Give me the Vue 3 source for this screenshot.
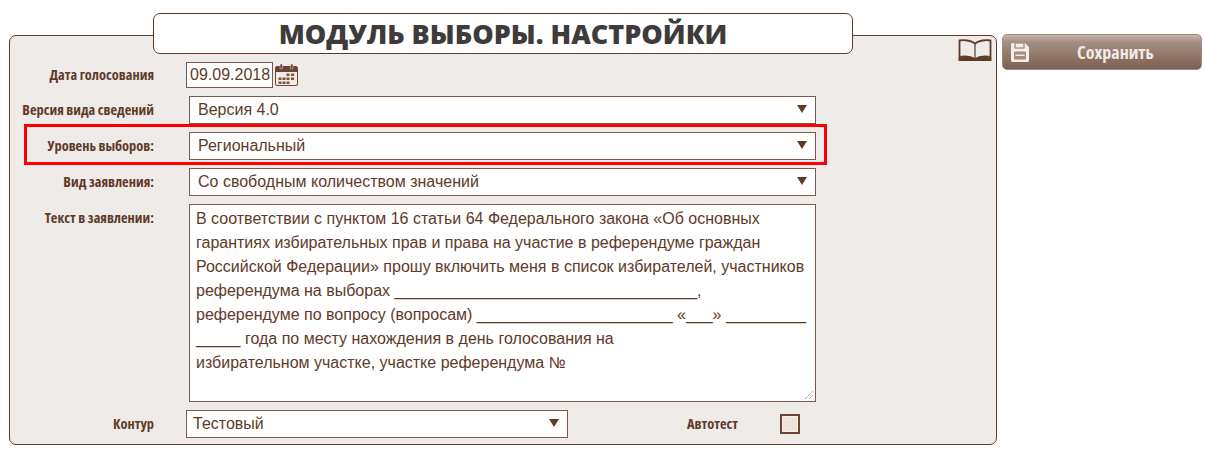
<script setup>
const statement = `В соответствии с пунктом 16 статьи 64 Федерального закона «Об основных
гарантиях избирательных прав и права на участие в референдуме граждан
Российской Федерации» прошу включить меня в список избирателей, участников
референдума на выборах __________________________________,
референдуме по вопросу (вопросам) ______________________ «___» _________
_____ года по месту нахождения в день голосования на
избирательном участке, участке референдума №`
</script>

<template>
  <div class="page">
    <main class="main">
      <h1 class="title">МОДУЛЬ ВЫБОРЫ. НАСТРОЙКИ</h1>
      <section class="panel">
        <svg class="book" viewBox="0 0 34 22" width="34" height="22" aria-hidden="true">
          <path d="M17 4.500C13 1.500 6 0.500 1.500 1.500V18C7 17 13 17.500 17 20C21 17.500 27 17 32.500 18V1.500C28 0.500 21 1.500 17 4.500Z" fill="none" stroke="#5f3a28" stroke-width="1.800"/>
          <path d="M17 4.500V20" stroke="#5f3a28" stroke-width="1.200"/>
          <path d="M0.500 18.500H3C8 17.500 13 18 17 20C21 18 26 17.500 31 18.500H33.500V22H0.500Z" fill="#5f3a28"/>
        </svg>

        <div class="row date-row">
          <label class="label"><span>Дата голосования</span></label>
          <div class="date-input">09.09.2018</div>
          <svg class="calendar" viewBox="0 0 23 22" width="23" height="22" aria-hidden="true">
            <rect x="0.500" y="2.500" width="22" height="19" rx="1.500" fill="#f2ebe6" stroke="#6b4636"/>
            <path d="M1 3H22V8H1Z" fill="#6b4636"/>
            <rect x="5" y="0" width="2.500" height="5" rx="1" fill="#6b4636" stroke="#efebe8" stroke-width="0.500"/>
            <rect x="15.500" y="0" width="2.500" height="5" rx="1" fill="#6b4636" stroke="#efebe8" stroke-width="0.500"/>
            <path d="M11.500 9.500h3v2.500h-3zM16 9.500h3v2.500h-3zM3.500 13.500h3v2.500h-3zM7.500 13.500h3v2.500h-3zM11.500 13.500h3v2.500h-3zM16 13.500h3v2.500h-3zM3.500 17.500h3v2.500h-3zM7.500 17.500h3v2.500h-3zM11.500 17.500h3v2.500h-3z" fill="#7a5444"/>
          </svg>
        </div>

        <div class="row select-row">
          <label class="label"><span>Версия вида сведений</span></label>
          <div class="select wide">Версия 4.0<span class="arrow"></span></div>
        </div>
        <div class="row select-row highlighted">
          <label class="label"><span>Уровень выборов:</span></label>
          <div class="select wide">Региональный<span class="arrow"></span></div>
        </div>
        <div class="row select-row">
          <label class="label"><span>Вид заявления:</span></label>
          <div class="select wide">Со свободным количеством значений<span class="arrow"></span></div>
        </div>
        <div class="row text-row">
          <label class="label"><span>Текст в заявлении:</span></label>
          <div class="textarea">{{ statement }}
            <svg class="grip" viewBox="0 0 10 10" width="10" height="10" aria-hidden="true">
              <path d="M1 9L9 1M5 9L9 5" stroke="#777" stroke-width="1" stroke-dasharray="1 1"/>
            </svg>
          </div>
        </div>
        <div class="row bottom-row">
          <label class="label"><span>Контур</span></label>
          <div class="select contour">Тестовый<span class="arrow"></span></div>
          <label class="label auto-label"><span>Автотест</span></label>
          <span class="checkbox"></span>
        </div>
      </section>
    </main>
    <button class="save" type="button">
      <svg class="disk" viewBox="0 0 18 19" width="18" height="19" aria-hidden="true">
        <path d="M1.500 0H14L18 4V17.500a1.500 1.500 0 0 1-1.500 1.500H1.500A1.500 1.500 0 0 1 0 17.500V1.500A1.500 1.500 0 0 1 1.500 0Z" fill="#f3eeea"/>
        <rect x="4" y="0" width="9" height="5" fill="#f3eeea" stroke="#9c8678" stroke-width="1.200"/>
        <rect x="3" y="8.500" width="12" height="8" rx="1" fill="#a38e81"/>
        <rect x="4.500" y="11.500" width="9" height="1.500" fill="#f3eeea"/>
      </svg>
      <span class="save-text">Сохранить</span>
    </button>
  </div>
</template>

<style>
html, body { margin: 0; background: #fff; overflow: hidden; }
</style>

<style scoped>
.page {
  display: flex;
  align-items: flex-start;
  gap: 5px;
  width: 1205px;
  height: 449px;
  box-sizing: border-box;
  padding: 13px 0 0 9px;
  font-family: "Liberation Sans", Arial, sans-serif;
  color: #5f3a28;
  overflow: hidden;
}
.main { width: 988px; flex: none; position: relative; }
.title {
  box-sizing: border-box;
  position: relative;
  z-index: 1;
  width: 700px;
  height: 41px;
  margin: 0 0 -19px 144px;
  border: 1px solid #5f3a28;
  border-radius: 7px;
  background: #fff;
  text-align: center;
  font: 800 27px/39px "Open Sans", sans-serif;
  color: #3f3b3a;
}
.panel {
  box-sizing: border-box;
  position: relative;
  height: 410px;
  border: 1px solid #5f3a28;
  border-radius: 7px;
  background: #efebe8;
  padding-top: 26px;
}
.book { position: absolute; right: 4px; top: 3px; }
.row { display: flex; align-items: center; }
.label {
  flex: none;
  display: block;
  width: 144px;
  text-align: right;
  white-space: nowrap;
  font: 700 14.400px/18px "Open Sans", sans-serif;
  font-stretch: 75%;
  color: #5f3a28;
}
.label span { display: inline-block; }
.date-row { height: 26px; margin-bottom: 8px; }
.date-input {
  box-sizing: border-box;
  width: 87px;
  height: 26px;
  margin-left: 32px;
  border: 1px solid #7a5a4a;
  background: #fff;
  padding-left: 3px;
  font-size: 16px;
  line-height: 24px;
}
.calendar { margin-left: 2px; }
.select {
  box-sizing: border-box;
  position: relative;
  height: 28px;
  border: 1px solid #7a5a4a;
  background: #fff;
  font-size: 16px;
  line-height: 26px;
  white-space: nowrap;
}
.wide { width: 627px; margin-left: 35px; padding-left: 8px; }
.contour { width: 382px; margin-left: 32px; padding-left: 6px; }
.arrow {
  position: absolute;
  right: 8px;
  top: 8px;
  border-left: 5px solid transparent;
  border-right: 5px solid transparent;
  border-top: 8px solid #5f3a28;
}
.select-row { height: 28px; margin-bottom: 8px; position: relative; }
.highlighted::after {
  content: "";
  position: absolute;
  left: 14px;
  right: 169px;
  top: -8px;
  bottom: -5px;
  border: 3px solid #f00;
  pointer-events: none;
}
.text-row { align-items: flex-start; margin-bottom: 8px; }
.text-row .label { margin-top: 5px; }
.textarea {
  box-sizing: border-box;
  position: relative;
  width: 627px;
  height: 198px;
  margin-left: 35px;
  border: 1px solid #7a5a4a;
  background: #fff;
  padding: 2px 6px 0;
  font-size: 16px;
  line-height: 24px;
  white-space: pre;
}
.grip { position: absolute; right: 1px; bottom: 1px; }
.bottom-row { height: 28px; }
.auto-label { width: 51px; margin-left: 119px; text-align: left; }
.checkbox {
  box-sizing: border-box;
  width: 20px;
  height: 20px;
  margin-left: 42px;
  border: 2px solid #6b4636;
  background: #efe2da;
  box-shadow: inset 0 0 0 1px #f6f0ec;
}
.save {
  box-sizing: border-box;
  flex: none;
  display: flex;
  align-items: center;
  width: 200px;
  height: 36px;
  margin-top: 21px;
  padding: 0 0 0 8px;
  border: 1px solid #a08a7e;
  border-radius: 5px;
  background: linear-gradient(#c6b7ae 0, #a59084 20%, #7d5f50 100%);
  color: #f1ebe7;
}
.save-text {
  margin-left: 48px;
  width: 76px;
  text-align: center;
  white-space: nowrap;
  font: 700 18px/20px "Open Sans", sans-serif;
  font-stretch: 75%;
}
</style>
